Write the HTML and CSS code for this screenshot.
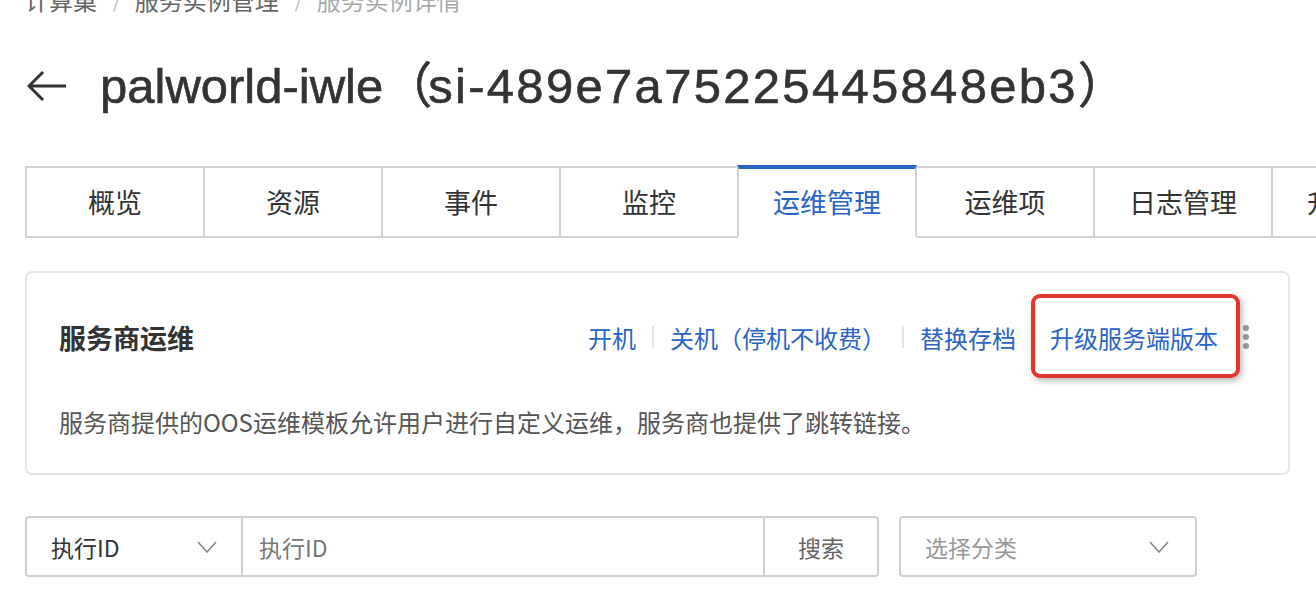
FILE: index.html
```html
<!DOCTYPE html>
<html lang="zh-CN">
	<head>
		<meta charset="utf-8" />
		<title>服务实例详情</title>
		<link rel="stylesheet" href="styles.css">
	</head>
	<body>
		<div class="page">
			<div class="crumbs">
				<span>计算巢</span>
				<span class="sep">/</span>
				<span>服务实例管理</span>
				<span class="sep">/</span>
				<span class="cur">服务实例详情</span>
			</div>

			<div class="head">
				<svg class="back" width="40" height="32" viewBox="0 0 40 32">
					<path d="M39 16H2M16 2L2 16l14 14" fill="none" stroke="#333" stroke-width="3" />
				</svg>
				<h1>palworld-iwle（<span class="sid">si-489e7a75225445848eb3</span>）</h1>
			</div>

			<div class="tabs">
				<div class="tab">概览</div>
				<div class="tab">资源</div>
				<div class="tab">事件</div>
				<div class="tab">监控</div>
				<div class="tab active">运维管理</div>
				<div class="tab">运维项</div>
				<div class="tab">日志管理</div>
				<div class="tab">升级记录</div>
			</div>

			<div class="card">
				<div class="card-head">
					<h2>服务商运维</h2>
					<div class="actions">
						<a>开机</a>
						<span class="bar"></span>
						<a>关机（停机不收费）</a>
						<span class="bar"></span>
						<a>替换存档</a>
						<span class="bar"></span>
						<a class="mark">升级服务端版本</a>
						<span class="more"><i></i><i></i><i></i></span>
					</div>
				</div>
				<p class="desc">服务商提供的OOS运维模板允许用户进行自定义运维，服务商也提供了跳转链接。</p>
			</div>

			<div class="search">
				<div class="group">
					<div class="select first">
						<span>执行ID</span>
						<svg width="20" height="12" viewBox="0 0 20 12"><path d="M1 1l9 10 9-10" fill="none" stroke="#888" stroke-width="1.6" /></svg>
					</div>
					<div class="input">执行ID</div>
					<div class="btn">搜索</div>
				</div>
				<div class="select kind">
					<span>选择分类</span>
					<svg width="20" height="12" viewBox="0 0 20 12"><path d="M1 1l9 10 9-10" fill="none" stroke="#888" stroke-width="1.6" /></svg>
				</div>
			</div>
		</div>
	</body>
</html>
```

FILE: styles.css
```css
body {
	margin: 0;
	overflow: hidden;
	background: #fff;
	color: #333;
	font-family: "Noto Sans", "Noto Sans CJK SC", sans-serif;
}
.page {
	width: 1265px;
	padding-left: 25px;
}

/* breadcrumb */
.crumbs {
	display: flex;
	align-items: center;
	margin-top: -12px;
	height: 24px;
	font-size: 24px;
	line-height: 24px;
	color: #666;
	font-family: "Noto Sans CJK SC", sans-serif;
}
.crumbs .sep {
	color: #bbb;
	margin: 0 14px 0 16px;
	font-size: 20px;
}
.crumbs .cur {
	color: #aaa;
}

/* title */
.head {
	display: flex;
	align-items: center;
	height: 60px;
	margin-top: 44px;
}
.back {
	margin-left: 2px;
	flex: none;
}
h1 {
	margin: 0 0 0 33px;
	font-family: "Liberation Sans", "Noto Sans CJK SC", sans-serif;
	font-size: 49px;
	font-weight: 400;
	-webkit-text-stroke: 0.6px #333;
	line-height: 60px;
	color: #333;
	white-space: nowrap;
}
.sid {
	letter-spacing: 2.3px;
	margin-left: -4px;
}

/* tabs */
.tabs {
	display: flex;
	margin-top: 50px;
	white-space: nowrap;
}
.tab {
	flex: none;
	box-sizing: border-box;
	width: 180px;
	height: 72px;
	margin-right: -2px;
	border: 2px solid #d2d2d2;
	text-align: center;
	line-height: 68px;
	font-size: 27px;
	font-family: "Noto Sans CJK SC", sans-serif;
	color: #333;
	background: #fff;
}
.tab.active {
	position: relative;
	border-top: 4px solid #2a64c4;
	border-bottom-color: #fff;
	color: #2a64c4;
	line-height: 66px;
	margin-top: -1px;
	height: 73px;
	z-index: 1;
}

/* card */
.card {
	margin-top: 33px;
	border: 2px solid #e6e6e6;
	border-radius: 7px;
	padding: 46px 39px 35px 32px;
	font-family: "Noto Sans CJK SC", sans-serif;
}
.card-head {
	display: flex;
	align-items: center;
	justify-content: space-between;
	height: 36px;
}
h2 {
	margin: 0;
	font-size: 27px;
	font-weight: 600;
	color: #333;
}
.actions {
	display: flex;
	align-items: center;
	font-size: 24px;
	color: #2a64c4;
}
.actions a {
	cursor: pointer;
}
.bar {
	width: 2px;
	height: 22px;
	background: #e4e4e4;
	margin: 0 16px;
}
.mark {
	position: relative;
}
.mark::after {
	content: "";
	position: absolute;
	left: -19px;
	right: -22px;
	top: -26px;
	bottom: -23px;
	border: 4px solid #e3352b;
	border-radius: 9px;
	box-shadow: 2px 3px 6px rgba(0, 0, 0, 0.28);
}
.more {
	display: flex;
	flex-direction: column;
	gap: 3px;
	margin-left: 25px;
}
.more i {
	width: 6px;
	height: 6px;
	border-radius: 50%;
	background: #999;
}
.desc {
	margin: 51px 0 0;
	font-size: 24px;
	line-height: 32px;
	color: #555;
}

/* search row */
.search {
	display: flex;
	gap: 20px;
	margin-top: 41px;
	font-size: 23px;
	font-family: "Noto Sans CJK SC", sans-serif;
}
.group {
	display: flex;
	height: 61px;
	box-sizing: border-box;
	border: 2px solid #d0d0d0;
	border-radius: 4px;
}
.select {
	display: flex;
	align-items: center;
	justify-content: space-between;
	box-sizing: border-box;
	height: 61px;
}
.select.first {
	width: 216px;
	padding: 0 24px 0 24px;
	border-right: 2px solid #d0d0d0;
	height: auto;
	color: #333;
}
.input {
	display: flex;
	align-items: center;
	width: 504px;
	padding-left: 16px;
	color: #777;
	border-right: 2px solid #d0d0d0;
}
.btn {
	display: flex;
	align-items: center;
	justify-content: center;
	width: 112px;
	color: #666;
}
.select.kind {
	width: 298px;
	padding: 0 26px 0 24px;
	border: 2px solid #d0d0d0;
	border-radius: 4px;
	color: #999;
}
```
